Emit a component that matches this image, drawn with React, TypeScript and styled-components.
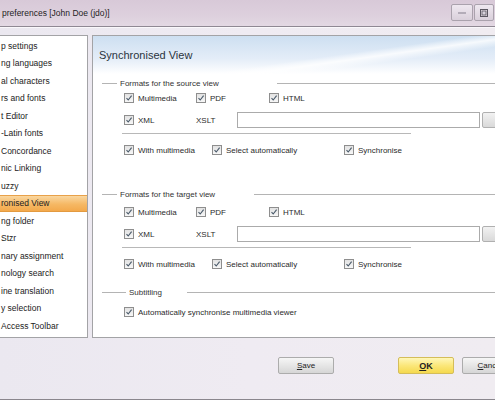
import styled, { createGlobalStyle } from 'styled-components'

const GlobalStyle = createGlobalStyle`
  html, body {
    margin: 0;
    padding: 0;
    overflow: hidden;
    background: #d9d7db;
  }
`;

const Window = styled.div`
  width: 495px;
  height: 400px;
  overflow: hidden;
  display: flex;
  flex-direction: column;
  font-family: "Liberation Sans", Arial, sans-serif;
  color: #262626;
  background: #d6d4d8;
`;

const TitleBar = styled.div`
  height: 26px;
  flex: none;
  display: flex;
  align-items: center;
  padding-left: 2px;
  background: linear-gradient(to bottom, #d8c9d8, #ddd0dd 60%, #e3d8e3);
  border-bottom: 1px solid #8f8893;
  font-size: 8.5px;
  color: #1e1e1e;
`;

const TitleText = styled.span`
  flex: 1;
`;

const WinButton = styled.div<{ $w: number }>`
  width: ${({ $w }) => $w}px;
  height: 15px;
  align-self: flex-start;
  margin-top: 4px;
  margin-right: 1px;
  border: 1px solid #aaa2ad;
  border-radius: 2px;
  background: linear-gradient(to bottom, #efe8f0, #d9d0db);
  display: flex;
  align-items: center;
  justify-content: center;
`;

const Body = styled.div`
  flex: 1;
  display: flex;
  flex-direction: column;
  background: linear-gradient(to right, #ebe8f0, #efebf2 50%, #f0ecf1);
  border-top: 1px solid #faf8fb;
  border-bottom: 1px solid #8a868d;
`;

const Panels = styled.div`
  display: flex;
  gap: 4px;
  margin-top: 7px;
  height: 303px;
`;

const NavList = styled.div`
  width: 88px;
  flex: none;
  background: #fff;
  border: 1px solid #a3a3a6;
  border-left: none;
  box-sizing: border-box;
  padding-top: 1px;
  overflow: hidden;
`;

const NavItem = styled.div<{ $selected?: boolean }>`
  height: 17.5px;
  display: flex;
  align-items: center;
  padding-left: 1px;
  font-size: 8.5px;
  white-space: nowrap;
  color: #222;
  box-sizing: border-box;
  ${({ $selected }) =>
    $selected
      ? `
    background: linear-gradient(to bottom, #fad7a0, #f6b864 55%, #f3a94c);
    border-top: 1px solid #e8a14a;
    border-bottom: 1px solid #e39a40;
    `
      : ''}
`;

const Page = styled.div`
  width: 420px;
  flex: none;
  background: #fff;
  border: 1px solid #a3a3a6;
  box-sizing: border-box;
  display: flex;
  flex-direction: column;
`;

const PageHeader = styled.div`
  height: 38px;
  display: flex;
  align-items: center;
  padding-left: 6px;
  font-size: 11px;
  color: #2a3440;
  background:
    linear-gradient(172deg, rgba(255,255,255,0) 55%, rgba(255,255,255,0.8) 62%, rgba(255,255,255,0) 70%),
    linear-gradient(to bottom, #cddff1, #e4edf8 60%, #ffffff);
`;

const GroupTitle = styled.div<{ $mt: number; $lead: number; $gap: number }>`
  height: 16px;
  margin-top: ${({ $mt }) => $mt}px;
  display: flex;
  align-items: center;
  font-size: 8px;
  color: #333;

  &::before {
    content: '';
    margin-left: 9px;
    width: ${({ $lead }) => $lead}px;
    height: 1px;
    background: #b4b4b4;
    margin-right: 3px;
  }

  &::after {
    content: '';
    flex: 1;
    height: 1px;
    background: #b4b4b4;
    margin-left: ${({ $gap }) => $gap}px;
  }
`;

const Row = styled.div<{ $mt: number; $h?: number }>`
  height: ${({ $h }) => $h ?? 14}px;
  margin-top: ${({ $mt }) => $mt}px;
  display: flex;
  align-items: center;
  padding-left: 31px;
`;

const Cell = styled.label<{ $w?: number }>`
  ${({ $w }) => ($w ? `width: ${$w}px;` : '')}
  flex: none;
  display: flex;
  align-items: center;
  gap: 4px;
  font-size: 8px;
  color: #2b2b2b;
  white-space: nowrap;
`;

const Box = styled.span`
  width: 10px;
  height: 10px;
  box-sizing: border-box;
  border: 1px solid #8e8e8e;
  background: linear-gradient(to bottom, #e2e2e2, #f7f7f7);
  display: flex;
  align-items: center;
  justify-content: center;
`;

const TextInput = styled.div`
  width: 243px;
  height: 16px;
  box-sizing: border-box;
  border: 1px solid #ababab;
  background: #fff;
`;

const Browse = styled.div`
  width: 20px;
  height: 16px;
  margin-left: 2px;
  box-sizing: border-box;
  border: 1px solid #b0b0b0;
  border-radius: 2px;
  background: linear-gradient(to bottom, #f2f2f2, #d9d9d9);
`;

const Separator = styled.div<{ $mt: number }>`
  margin-top: ${({ $mt }) => $mt}px;
  margin-left: 29px;
  width: 289px;
  height: 1px;
  background: #b8b8b8;
`;

const Footer = styled.div`
  display: flex;
  padding-left: 278px;
  margin-top: 19px;
`;

const Button = styled.div<{ $primary?: boolean; $ml?: number }>`
  width: 56px;
  height: 17px;
  flex: none;
  margin-left: ${({ $ml }) => $ml ?? 0}px;
  box-sizing: border-box;
  border: 1px solid ${({ $primary }) => ($primary ? '#d4bd5a' : '#acacac')};
  border-radius: 2px;
  background: ${({ $primary }) =>
    $primary
      ? 'linear-gradient(to bottom, #fff7b8, #fbe77a 50%, #f5d94e)'
      : 'linear-gradient(to bottom, #f6f6f6, #e6e6e6 50%, #d6d6d6)'};
  display: flex;
  align-items: center;
  justify-content: center;
  font-size: ${({ $primary }) => ($primary ? 9 : 8)}px;
  font-weight: ${({ $primary }) => ($primary ? 'bold' : 'normal')};
  color: #222;
  white-space: nowrap;
  overflow: hidden;

  u {
    text-decoration: underline;
  }
`;

const navItems = [
  'p settings',
  'ng languages',
  'al characters',
  'rs and fonts',
  't Editor',
  '-Latin fonts',
  'Concordance',
  'nic Linking',
  'uzzy',
  'ronised View',
  'ng folder',
  'Stzr',
  'nary assignment',
  'nology search',
  'ine translation',
  'y selection',
  ' Access Toolbar',
];

function Check({ label, w }: { label: string; w?: number }) {
  return (
    <Cell $w={w}>
      <Box>
        <svg width="8" height="8" viewBox="0 0 8 8">
          <path d="M1.5 4.2 L3.2 6 L6.6 1.6" fill="none" stroke="#4a5a6a" strokeWidth="1.1" />
        </svg>
      </Box>
      {label}
    </Cell>
  );
}

function FormatGroup({ title, mt, lead, gap, rowGap }: { title: string; mt: number; lead: number; gap: number; rowGap: number }) {
  return (
    <>
      <GroupTitle $mt={mt} $lead={lead} $gap={gap}>{title}</GroupTitle>
      <Row $mt={rowGap}>
        <Check label="Multimedia" w={72} />
        <Check label="PDF" w={73} />
        <Check label="HTML" />
      </Row>
      <Row $mt={7} $h={16}>
        <Check label="XML" w={72} />
        <Cell $w={41}>XSLT</Cell>
        <TextInput />
        <Browse />
      </Row>
      <Separator $mt={5} />
      <Row $mt={9}>
        <Check label="With multimedia" w={88} />
        <Check label="Select automatically" w={132} />
        <Check label="Synchronise" />
      </Row>
    </>
  );
}

export default function App() {
  return (
    <Window>
      <GlobalStyle />
      <TitleBar>
        <TitleText>preferences [John Doe (jdo)]</TitleText>
        <WinButton $w={20}>
          <svg width="8" height="3" viewBox="0 0 8 3">
            <rect x="0" y="1" width="8" height="2" fill="#b3acb8" />
          </svg>
        </WinButton>
        <WinButton $w={18}>
          <svg width="8" height="8" viewBox="0 0 8 8">
            <rect x="0.5" y="0.5" width="7" height="7" fill="none" stroke="#5a5660" />
            <rect x="2" y="2" width="4" height="4" fill="#d8d2dc" stroke="#5a5660" strokeWidth="0.8" />
          </svg>
        </WinButton>
      </TitleBar>
      <Body>
        <Panels>
          <NavList>
            {navItems.map((item, i) => (
              <NavItem key={i} $selected={i === 9}>{item}</NavItem>
            ))}
          </NavList>
          <Page>
            <PageHeader>Synchronised View</PageHeader>
            <FormatGroup title="Formats for the source view" mt={1} lead={15} gap={58} rowGap={0} />
            <FormatGroup title="Formats for the target view" mt={29} lead={15} gap={39} rowGap={3} />
            <GroupTitle $mt={13} $lead={24} $gap={25}>Subtitling</GroupTitle>
            <Row $mt={5}>
              <Check label="Automatically synchronise multimedia viewer" />
            </Row>
          </Page>
        </Panels>
        <Footer>
          <Button><u>S</u>ave</Button>
          <Button $primary $ml={64}><u>O</u>K</Button>
          <Button $ml={8}><u>C</u>ancel</Button>
        </Footer>
      </Body>
    </Window>
  );
}
